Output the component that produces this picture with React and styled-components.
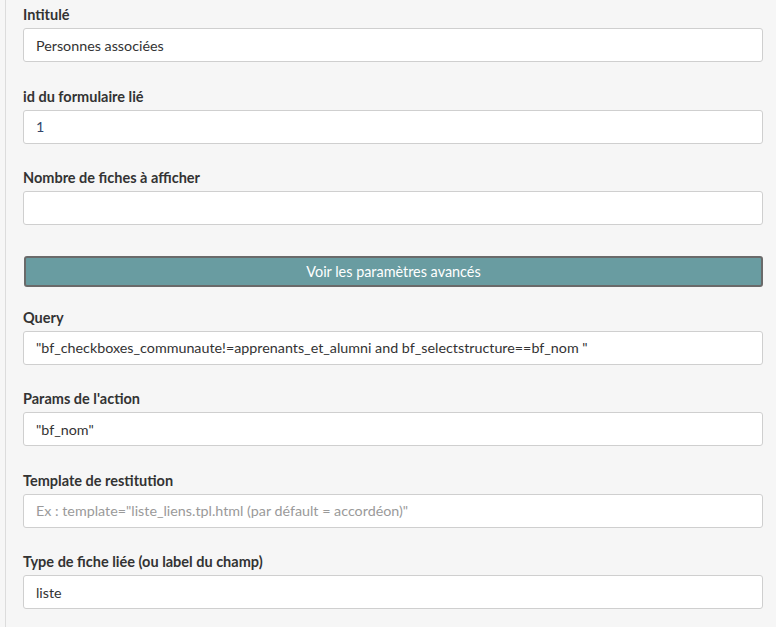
import React from "react"
import styled, { createGlobalStyle } from "styled-components"

const GlobalStyle = createGlobalStyle`
  html, body {
    margin: 0;
    padding: 0;
    background: #f6f6f6;
    font-family: Lato, "Open Sans", sans-serif;
    color: #333;
  }
`

const Panel = styled.div`
  display: flex;
  flex-direction: column;
  margin-left: 5px;
  border-left: 1px solid #dcdcdc;
  padding: 5px 13px 0 17px;
  min-height: 627px;
  box-sizing: border-box;
`

const Group = styled.div`
  display: flex;
  flex-direction: column;
  margin-bottom: 24.5px;
`

const Label = styled.label`
  font-size: 14.5px;
  font-weight: 700;
  line-height: 20px;
  margin-bottom: 3px;
  color: #333;
`

const Input = styled.input`
  height: 34px;
  box-sizing: border-box;
  width: 100%;
  border: 1px solid #cfcfcf;
  border-radius: 3px;
  background: #fff;
  padding: 0 12px;
  font-family: Lato, "Open Sans", sans-serif;
  font-size: 14.3px;
  color: ${p => (p.$accent ? "#34466b" : "#333")};
  outline: none;

  &::placeholder {
    color: #9a9a9a;
  }
`

const AdvancedButton = styled.button`
  display: block;
  width: calc(100% - 1px);
  margin: 6px 0 21px 1px;
  height: 31px;
  box-sizing: border-box;
  background: #699ca1;
  border: 2px solid #6a6a6a;
  border-radius: 3px;
  color: #fff;
  font-family: Lato, "Open Sans", sans-serif;
  font-size: 14.4px;
  cursor: pointer;
`

const Field = ({ label, value, placeholder, accent }) => (
  <Group>
    <Label>{label}</Label>
    <Input defaultValue={value} placeholder={placeholder} $accent={accent} />
  </Group>
)

export default function App() {
  return (
    <>
      <GlobalStyle />
      <Panel>
        <Field label="Intitulé" value="Personnes associées" />
        <Field label="id du formulaire lié" value="1" accent />
        <Field label="Nombre de fiches à afficher" value="" />
        <AdvancedButton>Voir les paramètres avancés</AdvancedButton>
        <Field
          label="Query"
          value={'"bf_checkboxes_communaute!=apprenants_et_alumni and bf_selectstructure==bf_nom "'}
        />
        <Field label="Params de l'action" value={'"bf_nom"'} />
        <Field
          label="Template de restitution"
          placeholder={'Ex : template="liste_liens.tpl.html (par défault = accordéon)"'}
        />
        <Field label="Type de fiche liée (ou label du champ)" value="liste" />
      </Panel>
    </>
  )
}
